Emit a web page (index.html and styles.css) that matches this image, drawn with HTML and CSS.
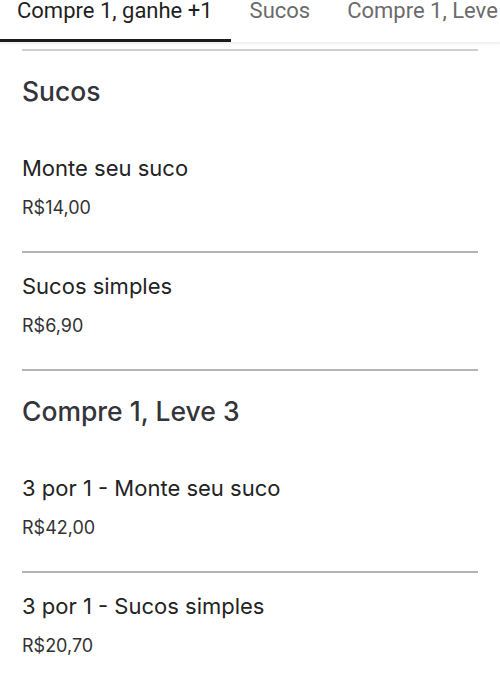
FILE: index.html
```html
<!DOCTYPE html>
<html lang="pt-BR">
<head>
    <meta charset="UTF-8">
    <meta name="viewport" content="width=device-width, initial-scale=1.0">
    <title>Cardápio</title>
    <link rel="stylesheet" href="styles.css">
</head>
<body>
    <nav class="tabs">
        <a class="tab active" href="#">Compre 1, ganhe +1</a>
        <a class="tab" href="#">Sucos</a>
        <a class="tab" href="#">Compre 1, Leve 3</a>
    </nav>
    <main class="menu">
        <section class="section">
            <h2 class="section-title">Sucos</h2>
            <div class="item">
                <div class="item-name">Monte seu suco</div>
                <div class="item-price">R$14,00</div>
            </div>
            <div class="item">
                <div class="item-name">Sucos simples</div>
                <div class="item-price">R$6,90</div>
            </div>
        </section>
        <section class="section">
            <h2 class="section-title">Compre 1, Leve 3</h2>
            <div class="item">
                <div class="item-name">3 por 1 - Monte seu suco</div>
                <div class="item-price">R$42,00</div>
            </div>
            <div class="item">
                <div class="item-name">3 por 1 - Sucos simples</div>
                <div class="item-price">R$20,70</div>
            </div>
        </section>
    </main>
</body>
</html>
```

FILE: styles.css
```css
body {
    margin: 0;
    background-color: #ffffff;
    font-family: Inter, "Noto Sans", sans-serif;
    color: #222;
    overflow: hidden;
}
.tabs {
    display: flex;
    white-space: nowrap;
    overflow: hidden;
    height: 42px;
    box-shadow: 0 2px 2px rgba(0, 0, 0, 0.07);
}
.tab {
    font-family: Roboto, "Liberation Sans", sans-serif;
    font-size: 22px;
    line-height: 22px;
    color: #6b6b6b;
    text-decoration: none;
    padding: 0 18px 17px 19px;
    border-bottom: 3px solid transparent;
}
.tab:first-child {
    padding-left: 17px;
}
.tab.active {
    color: #1f1f1f;
    border-bottom-color: #1c1c1c;
}
.menu {
    margin: 7px 22px 0;
    border-top: 2px solid #cfcfcf;
}
.section-title {
    margin: 24px 0 28px;
    font-size: 26.5px;
    line-height: 32px;
    font-weight: 500;
    color: #34353a;
}
.item {
    padding: 19px 0 31px;
    border-bottom: 2px solid #b4b4b4;
}
.section:last-child .item:last-child {
    border-bottom: none;
}
.item-name {
    font-size: 22px;
    line-height: 28px;
    color: #232323;
}
.item-price {
    margin-top: 14px;
    font-size: 18px;
    line-height: 24px;
    color: #333;
}
```
